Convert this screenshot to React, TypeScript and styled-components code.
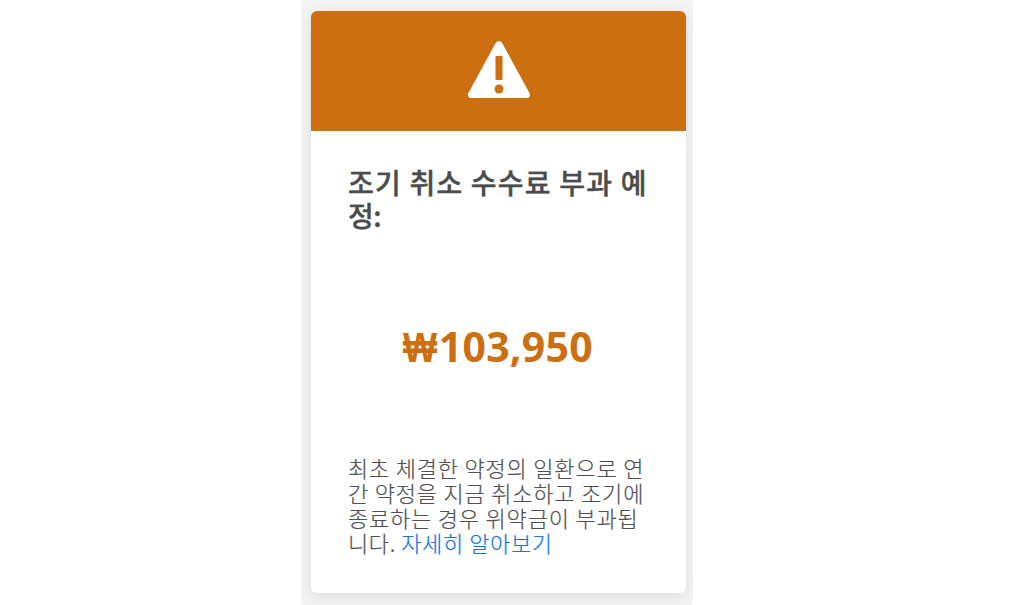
import React from "react";
import styled, { createGlobalStyle } from "styled-components";

const Global = createGlobalStyle`
  body { margin: 0; background: #fff; }
  * { box-sizing: border-box; }
`;
const Backdrop = styled.main`
  width: 392px;
  height: 605px;
  margin-left: 301px;
  padding: 11px 7px 12px 10px;
  background: #f4f4f4;
  overflow: hidden;
  font-family: "Noto Sans", "Noto Sans CJK KR", sans-serif;
`;
const Card = styled.section`
  height: 582px;
  border-radius: 6px;
  overflow: hidden;
  background: #fff;
  box-shadow: 0 3px 16px rgba(0, 0, 0, 0.1);
`;
const Banner = styled.header`
  height: 120px;
  display: flex;
  justify-content: center;
  padding-top: 29px;
  background: #cb6f10;
`;
const Content = styled.div`
  padding: 35px 37px 0;
`;
const Title = styled.h1`
  margin: 0;
  height: 66px;
  font-family: "Noto Sans CJK KR", sans-serif;
  font-size: 28px;
  line-height: 33px;
  font-weight: 500;
  -webkit-text-stroke: 0.4px #4b4b4b;
  color: #4b4b4b;
  white-space: nowrap;
`;
const Line = styled.span<{ $spacing?: number }>`
  display: block;
  width: max-content;
  letter-spacing: ${({ $spacing = 0 }) => $spacing}px;
`;
const Amount = styled.p`
  margin: 84px 0 0;
  height: 60px;
  font-size: 41px;
  line-height: 60px;
  font-weight: 700;
  text-align: center;
  color: #cb6f10;
  letter-spacing: 0.25px;
`;
const Currency = styled.span`
  display: inline-block;
  margin-right: -5px;
  font-family: "Liberation Sans", sans-serif;
  font-size: 42px;
  line-height: 1;
  letter-spacing: 0;
  transform: translateX(-6.5px) scaleX(0.86);
  transform-origin: right;
`;
const Description = styled.p`
  margin: 79px 0 0;
  font-family: "Noto Sans CJK KR", sans-serif;
  font-size: 22px;
  line-height: 25px;
  font-weight: 300;
  -webkit-text-stroke: 0.2px currentColor;
  color: #505050;
  white-space: nowrap;
`;
const Link = styled.a`
  color: #1473e6;
  text-decoration: none;
`;

export default function App() {
  return (
    <Backdrop>
      <Global />
      <Card>
        <Banner>
          <svg width="64" height="60" viewBox="0 0 64 60" aria-hidden="true">
            <path d="M28.8 2.8a3.5 3.5 0 0 1 6.2 0l27.5 50.4a3.2 3.2 0 0 1-2.8 4.8H4.1a3.2 3.2 0 0 1-2.8-4.8Z" fill="#fff" />
            <rect x="28.5" y="16" width="7" height="24" rx="1" fill="#cb6f10" />
            <circle cx="32" cy="49" r="4.5" fill="#cb6f10" />
          </svg>
        </Banner>
        <Content>
          <Title><Line $spacing={1.2}>조기 취소 수수료 부과 예</Line><Line $spacing={-0.5}>정:</Line></Title>
          <Amount><Currency>₩</Currency>103,950</Amount>
          <Description>
            <Line $spacing={0.8}>최초 체결한 약정의 일환으로 연</Line>
            <Line $spacing={0.8}>간 약정을 지금 취소하고 조기에</Line>
            <Line $spacing={0.8}>종료하는 경우 위약금이 부과됩</Line>
            <Line $spacing={0.6}>니다. <Link>자세히 알아보기</Link></Line>
          </Description>
        </Content>
      </Card>
    </Backdrop>
  );
}
